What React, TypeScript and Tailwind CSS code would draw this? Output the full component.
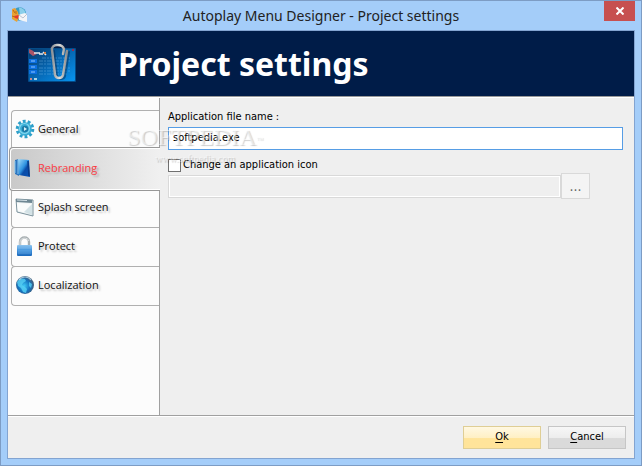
import React from "react";

function AppIcon() {
  return (
    <svg width="16" height="16" viewBox="0 0 16 16" aria-hidden="true">
      <circle cx="8.5" cy="7" r="6.800" fill="#3a9cc4" />
      <path d="M8 0.500a6.500 6.500 0 0 1 6.500 5.500L9 9z" fill="#8ccfea" />
      <path d="M1 2l3-1 3 4 1 5-2 5-5-3z" fill="#e8a235" />
      <path d="M2 3l2 3M1 9l3 1M5 4v3" stroke="#b86c16" strokeWidth="1" />
      <path d="M7 8l7-2 2 1v8l-8-2z" fill="#f4f5f8" />
      <path d="M3 9l5-1-1 4-3-1z" fill="#e23b2e" />
      <path d="M8 8l4 3 4-4" stroke="#a3acbd" strokeWidth=".7" fill="none" />
    </svg>
  );
}

function HeaderPicture() {
  return (
    <svg width="52" height="42" viewBox="0 0 52 42" aria-hidden="true">
      <defs>
        <linearGradient id="screen" x1="0" y1="0" x2="1" y2="1">
          <stop offset="0" stopColor="#063a6c" />
          <stop offset=".5" stopColor="#0668b4" />
          <stop offset="1" stopColor="#0794f0" />
        </linearGradient>
        <linearGradient id="clip" x1="0" y1="0" x2="1" y2="0">
          <stop offset="0" stopColor="#8d9297" />
          <stop offset=".5" stopColor="#dededb" />
          <stop offset="1" stopColor="#8c8c8c" />
        </linearGradient>
      </defs>
      <rect x="2" y="5" width="48" height="34" rx="1" fill="#0879c8" opacity=".5" />
      <rect x="3" y="6" width="46" height="32" rx="1" fill="url(#screen)" />
      <path d="M3 6c4 1 5 3 8 5l-4 2-4-3z" fill="#a85468" />
      <path d="M8 10h6M13 11h4M17 9l3 3" stroke="#dfe8f0" strokeWidth="1.600" />
      <path d="M18 9h2v2h-2z" fill="#d98345" />
      <path d="M46 6h2v2h-2z" fill="#942b51" />
      <g fill="#0b6fe0">
        <rect x="3" y="16" width="8" height="4" />
        <rect x="3" y="22" width="8" height="4" />
        <rect x="3" y="27" width="8" height="4" />
      </g>
      <path d="M5 18h4M5 24h4M5 29h4" stroke="#8ec6ff" strokeWidth="1" />
      <g stroke="#7cc0f2" strokeWidth="1" strokeDasharray="4 1 2 1" opacity=".38">
        <path d="M16 15h29M13 18h32M13 21h29M13 25h31M13 28h32M13 31h29" />
      </g>
      <path d="M4 36h2" stroke="#c98a8a" strokeWidth="2" />
      <path d="M8 36h3" stroke="#a8d2e6" strokeWidth="2" />
      <g fill="none" strokeLinecap="round">
        <path d="M28 8l3 25c1 4 7 4 8 0l4-24" stroke="#042a52" strokeWidth="2" opacity=".5" />
        <path d="M37 11l1-5C36 0 25 1 26 7l3 25c1 4 7 4 8 0l4-24" stroke="url(#clip)" strokeWidth="2.400" />
      </g>
    </svg>
  );
}

function GearIcon() {
  return (
    <svg width="20" height="20" viewBox="0 0 20 20" aria-hidden="true">
      <circle cx="10" cy="10" r="7.700" fill="none" stroke="#2e9fc9" strokeWidth="3.200" strokeDasharray="2.8 2.040" />
      <circle cx="10" cy="10" r="6.800" fill="#38add5" />
      <circle cx="9.500" cy="9.500" r="5" fill="none" stroke="#83d4ec" strokeWidth="1.200" />
      <circle cx="10" cy="10" r="3.200" fill="#1d7ca8" />
      <path d="M9 8l3 2-3 2z" fill="#d9f3fa" />
    </svg>
  );
}

function BoxIcon() {
  return (
    <svg width="20" height="20" viewBox="0 0 20 20" aria-hidden="true">
      <defs>
        <linearGradient id="box" x1="0" y1="0" x2="1" y2="1">
          <stop offset="0" stopColor="#a5ddfa" />
          <stop offset=".45" stopColor="#2f93e0" />
          <stop offset=".6" stopColor="#0a4ca8" />
          <stop offset="1" stopColor="#0a53b5" />
        </linearGradient>
      </defs>
      <path d="M1 2l4-1v17l-4-2z" fill="#2d74bd" />
      <path d="M4 1l11 1 1 17-11-2z" fill="url(#box)" />
      <path d="M1 3v12M4 2v14" stroke="#84c6f0" />
      <path d="M14 3l1 15" stroke="#093a86" strokeWidth="1.500" />
    </svg>
  );
}

function SplashIcon() {
  return (
    <svg width="20" height="20" viewBox="0 0 20 20" aria-hidden="true">
      <path d="M1 2l17 1v16L2 15z" fill="#eef3f4" stroke="#7b929c" />
      <path d="M1 2l16 1v3L1 5z" fill="#6f8894" />
      <path d="M2 3l10 .5" stroke="#d5e2e8" />
      <path d="M2 6l15 1v10L3 14z" fill="#fafcfc" />
      <path d="M9 15l8-8v11z" fill="#d3e2e6" />
    </svg>
  );
}

function LockIcon() {
  return (
    <svg width="20" height="20" viewBox="0 0 20 20" aria-hidden="true">
      <defs>
        <linearGradient id="lock" x1="0" y1="0" x2="0" y2="1">
          <stop offset="0" stopColor="#8ec4ee" />
          <stop offset=".5" stopColor="#3f92dc" />
          <stop offset="1" stopColor="#1a68bb" />
        </linearGradient>
      </defs>
      <path d="M5 10V6C5 0 14 0 14 6v4" fill="none" stroke="#a7aeb1" strokeWidth="2.400" />
      <path d="M5 9V6C5 1 13 1 14 5" fill="none" stroke="#dfe3e4" />
      <rect x="2" y="9" width="15" height="11" rx="1" fill="url(#lock)" />
      <path d="M3 12h13M3 15h13M3 17h13" stroke="#8fc6f4" opacity=".45" />
    </svg>
  );
}

function GlobeIcon() {
  return (
    <svg width="20" height="20" viewBox="0 0 20 20" aria-hidden="true">
      <defs>
        <radialGradient id="globe" cx=".45" cy=".55" r=".55">
          <stop offset="0" stopColor="#3ec8f5" />
          <stop offset=".6" stopColor="#1472c0" />
          <stop offset="1" stopColor="#46617c" />
        </radialGradient>
      </defs>
      <circle cx="10" cy="10" r="9" fill="url(#globe)" />
      <path d="M2 7c2-4 6-4 8-3l1 2-3 2-1 2 3 2 2 2-1 4-3-1-2-4-3-2zM14 7l3 2-1 4-2-2z" fill="#58d2f5" opacity=".8" />
      <path d="M4 5c3-4 9-4 12 0" fill="none" stroke="#cfeaf6" strokeWidth="1.200" opacity=".7" />
    </svg>
  );
}

const tabs = [
  { name: "General", icon: <GearIcon /> },
  { name: "Rebranding", icon: <BoxIcon />, selected: true },
  { name: "Splash screen", icon: <SplashIcon /> },
  { name: "Protect", icon: <LockIcon /> },
  { name: "Localization", icon: <GlobeIcon /> },
];

function Sidebar() {
  return (
    <nav
      aria-label="Project settings"
      className="flex w-[152px] shrink-0 flex-col border-r border-[#a0a0a0] bg-[#fcfcfc] pt-3 font-['Open_Sans',sans-serif] font-medium"
    >
      {tabs.map((tab) =>
        tab.selected ? (
          <button
            key={tab.name}
            type="button"
            aria-current="page"
            className="z-10 -mr-px -mb-0.5 ml-px flex h-11 items-center gap-1 rounded-l-sm border border-r-0 border-[#989898] bg-linear-to-r from-[#c9c9c9] to-[#f0f0f0] pb-0.5 pl-1 text-[#fb3c44] shadow-[inset_1px_1px_0_#fff,inset_0_-1px_0_#fff] [text-shadow:2px_2px_2px_#aaa]"
          >
            {tab.icon}
            {tab.name}
          </button>
        ) : (
          <button
            key={tab.name}
            type="button"
            className="ml-[3px] flex h-10 items-center gap-[3px] rounded-l-sm border border-r-0 border-[#b0b0b0] pb-0.5 pl-[3px] text-[#111] not-first:-mt-px first:mb-[-3px] [text-shadow:2px_2px_2px_#bbb]"
          >
            {tab.icon}
            {tab.name}
          </button>
        ),
      )}
    </nav>
  );
}

function Watermark() {
  return (
    <div
      aria-hidden="true"
      className="pointer-events-none absolute top-[90px] left-[119px] z-20 w-[136px] text-center font-['Liberation_Serif',serif] whitespace-nowrap text-white/50 [text-shadow:1px_1px_1px_#0003]"
    >
      <div className="text-2xl leading-8">
        SOFTPEDIA<sup className="text-[7px]">™</sup>
      </div>
      <div className="text-[10px] leading-3">www.softpedia.com</div>
    </div>
  );
}

export default function App() {
  return (
    <div className="flex min-h-screen flex-col border border-[#7d9cc4] bg-[#a4cdf9] px-1.5 pb-1.5 font-['DejaVu_Sans_Condensed','DejaVu_Sans',sans-serif] text-[11px] text-black">
      <header className="flex h-[29px] items-start">
        <div className="flex w-[31px] justify-start pt-1.5 pl-1">
          <AppIcon />
        </div>
        <h1 className="flex-1 pt-px text-center font-['Noto_Sans',sans-serif] text-sm leading-7 text-[#222]">
          Autoplay Menu Designer - Project settings
        </h1>
        <button type="button" aria-label="Close" className="flex h-5 w-[31px] items-center justify-center bg-[#c75050]">
          <svg width="8" height="8" viewBox="0 0 8 8" aria-hidden="true">
            <path d="M.5.5l7 7M7.500.5l-7 7" stroke="#fff" strokeWidth="2" />
          </svg>
        </button>
      </header>

      <div className="relative flex flex-1 flex-col border border-[#83a4d1] bg-[#efefef]">
        <div className="flex h-[66px] items-center border-b border-[#999] bg-[#001c48] pl-[18px]">
          <HeaderPicture />
          <h2 className="pl-10 font-['Noto_Sans',sans-serif] text-[32px] leading-10 font-bold text-white">
            Project settings
          </h2>
        </div>

        <main className="flex flex-1 border-t border-white">
          <Sidebar />
          <form className="flex min-w-0 flex-1 flex-col pt-3 pr-[11px] pl-2">
            <label htmlFor="file-name" className="pb-[3px] leading-[14px]">
              Application file name :
            </label>
            <input
              id="file-name"
              type="text"
              defaultValue="softpedia.exe"
              className="h-[23px] w-full border border-[#569de5] bg-white px-1 pb-0.5 outline-none"
            />
            <label className="mt-[7px] flex h-4 items-center gap-0.5">
              <input type="checkbox" className="size-[13px] appearance-none border border-[#707070] bg-white checked:bg-[#569de5]" />
              Change an application icon
            </label>
            <div className="flex items-center pr-[33px]">
              <input
                type="text"
                disabled
                aria-label="Application icon"
                className="h-[23px] min-w-0 flex-1 border border-[#d9d9d9] bg-[#efefef] px-1 shadow-[inset_0_0_0_1px_#fff]"
              />
              <button
                type="button"
                disabled
                aria-label="Browse"
                className="h-[26px] w-[29px] border border-[#d9d9d9] bg-[#f4f4f4] text-sm leading-5 text-[#666]"
              >
                ...
              </button>
            </div>
          </form>
        </main>

        <footer className="flex h-[43px] items-start justify-end gap-[7px] border-t border-[#a0a0a0] pt-2.5 pr-2 shadow-[inset_0_1px_0_#fff]">
          <button
            type="button"
            className="h-[23px] w-[78px] border border-[#dfce95] bg-linear-to-b from-[#fff8e2] from-0% via-[#fff0c5] via-50% to-[#ffe49a] to-55%"
          >
            <u className="underline-offset-2">O</u>k
          </button>
          <button
            type="button"
            className="h-[23px] w-[78px] border border-[#c6c6c6] bg-linear-to-b from-[#f7f7f7] from-0% via-[#ededed] via-50% to-[#dadada] to-55%"
          >
            <u className="underline-offset-2">C</u>ancel
          </button>
        </footer>
        <Watermark />
      </div>
    </div>
  );
}
